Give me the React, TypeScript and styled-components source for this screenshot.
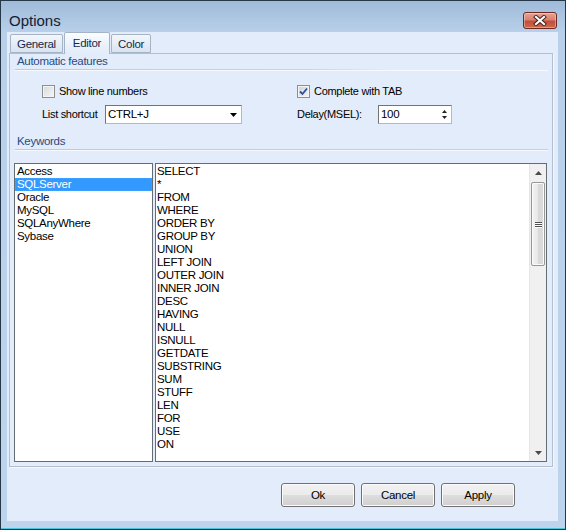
import React from 'react';
import styled, { createGlobalStyle } from 'styled-components';

const GlobalStyle = createGlobalStyle`
  html, body {
    margin: 0;
    padding: 0;
    background: #ffffff;
    overflow: hidden;
  }
  * {
    box-sizing: border-box;
  }
`;

const dialects = ['Access', 'SQLServer', 'Oracle', 'MySQL', 'SQLAnyWhere', 'Sybase'];

const keywords = [
  'SELECT', '*', 'FROM', 'WHERE', 'ORDER BY', 'GROUP BY', 'UNION', 'LEFT JOIN',
  'OUTER JOIN', 'INNER JOIN', 'DESC', 'HAVING', 'NULL', 'ISNULL', 'GETDATE',
  'SUBSTRING', 'SUM', 'STUFF', 'LEN', 'FOR', 'USE', 'ON',
];

const Window = styled.div`
  width: 566px;
  height: 530px;
  display: flex;
  flex-direction: column;
  border: 1px solid #26374a;
  background: linear-gradient(to bottom, #9fbbd9 0px, #b9d0ea 32px, #bdd4ed 100%);
  box-shadow: inset 0 -1px 0 #4fc3dc;
  font-family: 'Liberation Sans', Arial, sans-serif;
  font-size: 11px;
  letter-spacing: -0.3px;
  color: #000;
`;

const TitleBar = styled.div`
  height: 31px;
  flex-shrink: 0;
  display: flex;
  justify-content: space-between;
  align-items: flex-start;
  padding: 11px 8px 0 8px;
`;

const Title = styled.div`
  font-size: 15px;
  line-height: 17px;
  letter-spacing: 0;
  color: #14202e;
`;

const CloseButton = styled.div`
  width: 34px;
  height: 17px;
  border: 1px solid #6e2a22;
  border-radius: 3px;
  background: linear-gradient(to bottom, #e8a293 0%, #d7826f 45%, #c24f37 55%, #cc6a4f 100%);
  box-shadow: inset 0 0 0 1px rgba(255, 255, 255, 0.35);
  display: flex;
  align-items: center;
  justify-content: center;
`;

const Client = styled.div`
  flex: 1;
  margin: 0 7px 8px 6px;
  background: #e2ecfa;
  display: flex;
  flex-direction: column;
`;

const TabStrip = styled.div`
  height: 21px;
  flex-shrink: 0;
  display: flex;
  align-items: flex-end;
  padding-left: 3px;
  gap: 2px;
`;

const Tab = styled.div<{ $active?: boolean }>`
  height: ${({ $active }) => ($active ? '22px' : '19px')};
  margin-bottom: ${({ $active }) => ($active ? '-1px' : '0')};
  margin-left: ${({ $active }) => ($active ? '-1px' : '0')};
  margin-right: ${({ $active }) => ($active ? '-1px' : '0')};
  padding: ${({ $active }) => ($active ? '3px 8px 0' : '2px 6px 0')};
  border: 1px solid #a4b4c7;
  border-bottom: ${({ $active }) => ($active ? 'none' : '1px solid #a4b4c7')};
  border-radius: 2px 2px 0 0;
  background: ${({ $active }) =>
    $active
      ? 'linear-gradient(to bottom, #fbfdff 0%, #eaf1fb 60%, #e2ecfa 100%)'
      : 'linear-gradient(to bottom, #f4f7fb 0%, #e6edf6 50%, #d9e3f0 100%)'};
  color: #15284a;
  font-size: 11.5px;
  line-height: 14px;
  position: relative;
  z-index: ${({ $active }) => ($active ? 1 : 0)};
`;

const Panel = styled.div`
  height: 414px;
  flex-shrink: 0;
  margin: 0 5px 0 2px;
  border: 1px solid #b3bfcd;
  box-shadow: 1px 1px 0 #f4f8fd;
  display: flex;
  flex-direction: column;
`;

const GroupHeader = styled.div<{ $fade?: boolean }>`
  height: 16px;
  margin: 0 4px 0 5px;
  padding: 1px 0 0 2px;
  line-height: 13px;
  font-size: 11.5px;
  color: #2a4a80;
  border-bottom: 1px solid transparent;
  border-image: ${({ $fade }) =>
    $fade
      ? 'linear-gradient(to right, #bccadb 0%, #c8d4e3 55%, rgba(226,236,250,0) 70%) 1'
      : 'linear-gradient(to right, #bccadb 0%, #c4d0df 100%) 1'};
  box-shadow: 0 1px 0 #f6f9fd;
`;

const OptionsGrid = styled.div`
  display: grid;
  grid-template-columns: 255px 1fr;
  grid-template-rows: 13px 19px;
  row-gap: 7px;
  margin-top: 15px;
  padding-left: 32px;
`;

const Field = styled.div`
  display: flex;
  align-items: center;
  line-height: 13px;
`;

const CheckBox = styled.div<{ $checked?: boolean }>`
  width: 13px;
  height: 13px;
  border: 1px solid #8e8f8f;
  background: ${({ $checked }) =>
    $checked ? 'linear-gradient(135deg, #cfd3d8, #f1f2f4)' : 'linear-gradient(135deg, #d6d8db, #f7f7f8)'};
  box-shadow: inset 0 0 0 1px #f4f4f4;
  margin-right: 4px;
  display: flex;
  align-items: center;
  justify-content: center;
`;

const FieldLabel = styled.span<{ $width?: number }>`
  display: inline-block;
  width: ${({ $width }) => ($width ? `${$width}px` : 'auto')};
  flex-shrink: 0;
`;

const Combo = styled.div<{ $width: number }>`
  width: ${({ $width }) => $width}px;
  height: 19px;
  border: 1px solid #737373;
  border-right-color: #b8b8b8;
  border-bottom-color: #b8b8b8;
  background: #fff;
  display: flex;
  align-items: center;
  justify-content: space-between;
  padding: 0 4px 0 2px;
  font-size: 11.5px;
`;

const Spinner = styled.div`
  display: flex;
  flex-direction: column;
  gap: 3px;
  align-items: center;
`;

const KeywordsHeader = styled(GroupHeader)`
  margin-top: 10px;
`;

const ListsRow = styled.div`
  flex: 1;
  display: flex;
  gap: 2px;
  margin: 13px 5px 4px 4px;
  min-height: 0;
`;

const ListBox = styled.div<{ $width?: number }>`
  width: ${({ $width }) => ($width ? `${$width}px` : 'auto')};
  flex: ${({ $width }) => ($width ? '0 0 auto' : '1')};
  border: 1px solid #666c73;
  background: #fff;
  display: flex;
  overflow: hidden;
`;

const Items = styled.div`
  flex: 1;
  display: flex;
  flex-direction: column;
  padding-top: 1px;
  font-size: 11.5px;
`;

const Item = styled.div<{ $selected?: boolean; $pad?: number }>`
  height: 13px;
  line-height: 13px;
  padding-left: ${({ $pad }) => $pad ?? 2}px;
  white-space: nowrap;
  background: ${({ $selected }) => ($selected ? '#3399ff' : 'transparent')};
  color: ${({ $selected }) => ($selected ? '#fff' : '#000')};
  outline: ${({ $selected }) => ($selected ? '1px dotted #c9863f' : 'none')};
  outline-offset: -1px;
`;

const ScrollBar = styled.div`
  width: 17px;
  flex-shrink: 0;
  background: #f0f0f0;
  border-left: 1px solid #e6e6e6;
  display: flex;
  flex-direction: column;
`;

const ScrollArrow = styled.div`
  height: 17px;
  display: flex;
  align-items: center;
  justify-content: center;
`;

const ScrollThumb = styled.div`
  height: 84px;
  margin: 1px 1px 0 1px;
  border: 1px solid #979797;
  border-radius: 2px;
  background: linear-gradient(to right, #f3f3f3 0%, #e9e9e9 45%, #d8d8d8 55%, #dcdcdc 100%);
  box-shadow: inset 0 0 0 1px #fafafa;
  display: flex;
  flex-direction: column;
  align-items: center;
  justify-content: center;
  gap: 1px;
`;

const Grip = styled.div`
  width: 7px;
  height: 1px;
  background: #4f4f4f;
  box-shadow: 0 1px 0 #ffffff;
`;

const ScrollSpacer = styled.div`
  flex: 1;
`;

const ButtonRow = styled.div`
  flex: 1;
  display: flex;
  justify-content: flex-end;
  align-items: flex-start;
  gap: 6px;
  padding: 16px 43px 0 0;
`;

const Button = styled.div`
  width: 74px;
  height: 24px;
  border: 1px solid #707070;
  border-radius: 3px;
  background: linear-gradient(to bottom, #f2f2f2 0%, #ebebeb 48%, #dddddd 52%, #cfcfcf 100%);
  box-shadow: inset 0 0 0 1px #fbfbfb;
  display: flex;
  align-items: center;
  justify-content: center;
  font-size: 11.5px;
`;

const CloseGlyph = () => (
  <svg width="14" height="11" viewBox="0 0 14 11">
    <path d="M3 2 L11 9 M11 2 L3 9" stroke="#3a1f1c" strokeWidth="4" strokeLinecap="square" />
    <path d="M3 2 L11 9 M11 2 L3 9" stroke="#ffffff" strokeWidth="2.2" strokeLinecap="square" />
  </svg>
);

const CheckMark = () => (
  <svg width="9" height="9" viewBox="0 0 9 9">
    <path d="M1 4.5 L3.5 7 L8 1.5" stroke="#2e4f93" strokeWidth="1.8" fill="none" />
  </svg>
);

const Triangle = ({ up, size = 7, color = '#000' }: { up?: boolean; size?: number; color?: string }) => {
  const h = Math.ceil(size / 2);
  return (
    <svg width={size} height={h} viewBox={`0 0 ${size} ${h}`}>
      <path d={up ? `M0 ${h} L${size / 2} 0 L${size} ${h} Z` : `M0 0 L${size} 0 L${size / 2} ${h} Z`} fill={color} />
    </svg>
  );
};

export default function App() {
  return (
    <>
      <GlobalStyle />
      <Window>
        <TitleBar>
          <Title>Options</Title>
          <CloseButton>
            <CloseGlyph />
          </CloseButton>
        </TitleBar>
        <Client>
          <TabStrip>
            <Tab>General</Tab>
            <Tab $active>Editor</Tab>
            <Tab>Color</Tab>
          </TabStrip>
          <Panel>
            <GroupHeader $fade>Automatic features</GroupHeader>
            <OptionsGrid>
              <Field>
                <CheckBox />
                <FieldLabel>Show line numbers</FieldLabel>
              </Field>
              <Field>
                <CheckBox $checked>
                  <CheckMark />
                </CheckBox>
                <FieldLabel>Complete with TAB</FieldLabel>
              </Field>
              <Field>
                <FieldLabel $width={63}>List shortcut</FieldLabel>
                <Combo $width={137}>
                  <span>CTRL+J</span>
                  <Triangle size={7} />
                </Combo>
              </Field>
              <Field>
                <FieldLabel $width={81}>Delay(MSEL):</FieldLabel>
                <Combo $width={74}>
                  <span>100</span>
                  <Spinner>
                    <Triangle up size={5} color="#222" />
                    <Triangle size={5} color="#222" />
                  </Spinner>
                </Combo>
              </Field>
            </OptionsGrid>
            <KeywordsHeader>Keywords</KeywordsHeader>
            <ListsRow>
              <ListBox $width={139}>
                <Items>
                  {dialects.map((d) => (
                    <Item key={d} $selected={d === 'SQLServer'}>
                      {d}
                    </Item>
                  ))}
                </Items>
              </ListBox>
              <ListBox>
                <Items>
                  {keywords.map((k) => (
                    <Item key={k} $pad={1}>
                      {k}
                    </Item>
                  ))}
                </Items>
                <ScrollBar>
                  <ScrollArrow>
                    <Triangle up size={7} color="#4a4a4a" />
                  </ScrollArrow>
                  <ScrollThumb>
                    <Grip />
                    <Grip />
                    <Grip />
                  </ScrollThumb>
                  <ScrollSpacer />
                  <ScrollArrow>
                    <Triangle size={7} color="#4a4a4a" />
                  </ScrollArrow>
                </ScrollBar>
              </ListBox>
            </ListsRow>
          </Panel>
          <ButtonRow>
            <Button>Ok</Button>
            <Button>Cancel</Button>
            <Button>Apply</Button>
          </ButtonRow>
        </Client>
      </Window>
    </>
  );
}
